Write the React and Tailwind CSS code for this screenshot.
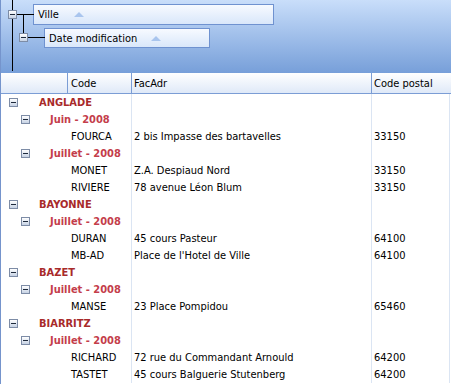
const groups = [
  {
    ville: 'ANGLADE',
    dates: [
      { label: 'Juin - 2008', rows: [['FOURCA', '2 bis Impasse des bartavelles', '33150']] },
      {
        label: 'Juillet - 2008',
        rows: [
          ['MONET', 'Z.A. Despiaud Nord', '33150'],
          ['RIVIERE', '78 avenue Léon Blum', '33150'],
        ],
      },
    ],
  },
  {
    ville: 'BAYONNE',
    dates: [
      {
        label: 'Juillet - 2008',
        rows: [
          ['DURAN', '45 cours Pasteur', '64100'],
          ['MB-AD', "Place de l'Hotel de Ville", '64100'],
        ],
      },
    ],
  },
  {
    ville: 'BAZET',
    dates: [{ label: 'Juillet - 2008', rows: [['MANSE', '23 Place Pompidou', '65460']] }],
  },
  {
    ville: 'BIARRITZ',
    dates: [
      {
        label: 'Juillet - 2008',
        rows: [
          ['RICHARD', '72 rue du Commandant Arnould', '64200'],
          ['TASTET', '45 cours Balguerie Stutenberg', '64200'],
        ],
      },
    ],
  },
]

const Minus = () => (
  <span className="flex h-[9px] w-[9px] shrink-0 items-center justify-center border border-[#7d8ca6] bg-linear-to-b from-white to-[#c6d2e4]">
    <span className="h-px w-[5px] bg-[#1e2a3c]" />
  </span>
)

const Arrow = () => (
  <svg width="10" height="5" viewBox="0 0 10 5" className="shrink-0">
    <polygon points="0,5 5,0 10,5" fill="#a9c5ee" />
  </svg>
)

const GroupRow = ({ level, label }) => (
  <div className="flex h-[17px]">
    <div
      className={
        level === 1
          ? 'flex w-[130px] items-center pl-[8px] font-bold text-[#a82a2a]'
          : 'flex w-[130px] items-center pl-[20px] font-bold text-[#c43d4b]'
      }
    >
      <Minus />
      <span className={level === 1 ? 'ml-[21px]' : 'ml-[20px]'}>{label}</span>
    </div>
    <div className="w-[240px] border-l border-[#dbe5f3]" />
    <div className="w-[79px] border-x border-[#dbe5f3]" />
  </div>
)

const DataRow = ({ row }) => (
  <div className="flex h-[17px] items-center text-black">
    <div className="w-[66px]" />
    <div className="w-[64px] pl-[4px]">{row[0]}</div>
    <div className="h-full w-[240px] border-l border-[#dbe5f3] pl-[2px] leading-[17px]">{row[1]}</div>
    <div className="h-full w-[79px] border-x border-[#dbe5f3] pl-[2px] leading-[17px]">{row[2]}</div>
  </div>
)

export default function App() {
  return (
    <div
      className="h-[384px] w-[451px] overflow-hidden border-l border-[#7594cc] bg-white text-[11px] leading-[17px]"
      style={{ fontFamily: '"DejaVu Sans Condensed", "Liberation Sans", Arial, sans-serif' }}
    >
      {/* Group by panel */}
      <div className="relative h-[73px] bg-linear-to-b from-[#c9defa] to-[#779fd9] pt-[4px]">
        <div className="absolute left-[11px] top-0 h-[71px] w-px bg-black" />
        <div className="absolute left-[16px] top-[14px] h-px w-[17px] bg-black" />
        <div className="absolute left-[22px] top-[14px] h-[23px] w-px bg-black" />
        <div className="absolute left-[26px] top-[37px] h-px w-[18px] bg-black" />
        <div className="absolute left-[7px] top-[10px]">
          <Minus />
        </div>
        <div className="absolute left-[18px] top-[33px]">
          <Minus />
        </div>

        <div className="ml-[32px] flex h-[21px] w-[241px] items-center border border-[#6f92d0] bg-linear-to-b from-[#f7faff] to-[#d9e7fa] pl-[4px] text-black">
          <span>Ville</span>
          <span className="ml-[15px]">
            <Arrow />
          </span>
        </div>
        <div className="ml-[43px] mt-[3px] flex h-[20px] w-[166px] items-center border border-[#6f92d0] bg-linear-to-b from-[#f7faff] to-[#d9e7fa] pl-[4px] text-black">
          <span>Date modification</span>
          <span className="ml-[14px]">
            <Arrow />
          </span>
        </div>
      </div>

      {/* Column headers */}
      <div className="flex h-[21px] border-b border-[#7b9dd5] bg-linear-to-b from-white to-[#dfe9f8] text-black">
        <div className="w-[66px]" />
        <div className="flex w-[64px] items-center border-l border-[#7b9dd5] pl-[3px]">Code</div>
        <div className="flex w-[240px] items-center border-l border-[#7b9dd5] pl-[2px]">FacAdr</div>
        <div className="flex flex-1 items-center border-l border-[#7b9dd5] pl-[2px]">Code postal</div>
      </div>

      {/* Rows */}
      <div className="flex flex-col">
        {groups.map((g) => (
          <div key={g.ville} className="flex flex-col">
            <GroupRow level={1} label={g.ville} />
            {g.dates.map((d, i) => (
              <div key={i} className="flex flex-col">
                <GroupRow level={2} label={d.label} />
                {d.rows.map((r) => (
                  <DataRow key={r[0]} row={r} />
                ))}
              </div>
            ))}
          </div>
        ))}
      </div>
    </div>
  )
}
